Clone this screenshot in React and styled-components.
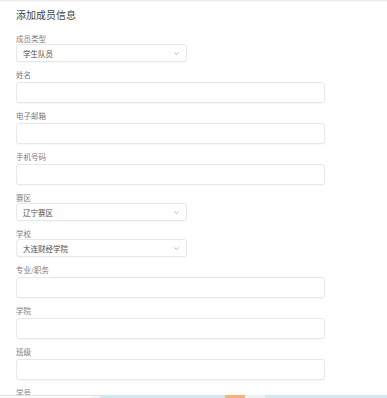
import React from 'react'
import styled, { createGlobalStyle } from 'styled-components'

const GlobalStyle = createGlobalStyle`
  html, body {
    margin: 0;
    padding: 0;
    background: #fff;
    font-family: "Noto Sans CJK SC", "Noto Sans", sans-serif;
    overflow: hidden;
  }
`

const Page = styled.div`
  width: 387px;
  height: 398px;
  overflow: hidden;
  position: relative;
  box-shadow: inset 0 2px 2px -1px rgba(0, 0, 0, 0.1);
`

const Form = styled.div`
  padding: 8px 16px 0 16px;
  display: flex;
  flex-direction: column;
  gap: 8px;
`

const Title = styled.h3`
  margin: 0 0 4px 0;
  font-size: 10px;
  line-height: 14px;
  font-weight: 400;
  color: #444;
`

const Field = styled.div`
  display: flex;
  flex-direction: column;
`

const Label = styled.label`
  font-size: 7.5px;
  line-height: 10px;
  height: 10px;
  color: #7a7c80;
  margin-bottom: ${p => (p.$select ? '0' : '2px')};
`

const Input = styled.div`
  box-sizing: border-box;
  width: 309px;
  height: 21px;
  border: 1px solid #e6e8ec;
  border-radius: 3px;
  box-shadow: 0 1px 1px rgba(0, 0, 0, 0.03);
  background: #fff;
`

const Select = styled.div`
  box-sizing: border-box;
  width: 171px;
  height: 18px;
  border: 1px solid #e6e8ec;
  border-radius: 3px;
  box-shadow: 0 1px 1px rgba(0, 0, 0, 0.03);
  background: #fff;
  display: flex;
  align-items: center;
  justify-content: space-between;
  padding: 0 6px 0 6px;
`

const SelectText = styled.span`
  font-size: 7.5px;
  color: #4a4a4a;
`

const Chevron = styled.svg`
  width: 7px;
  height: 7px;
  color: #a8abb2;
`

const BottomStrip = styled.div`
  position: absolute;
  left: 0;
  right: 0;
  bottom: 0;
  height: 3px;
  display: flex;
`

const Seg = styled.div`
  height: 100%;
  flex: 0 0 ${p => p.$w}px;
  background: ${p => p.$c};
  border-top: ${p => (p.$line ? '1px solid #e2e2e2' : 'none')};
  box-sizing: border-box;
`

const ChevronIcon = () => (
  <Chevron viewBox="0 0 10 10">
    <path d="M2 3.5 L5 6.5 L8 3.5" fill="none" stroke="currentColor" strokeWidth="1.2" />
  </Chevron>
)

const fields = [
  { label: '成员类型', select: '学生队员' },
  { label: '姓名' },
  { label: '电子邮箱' },
  { label: '手机号码' },
  { label: '赛区', select: '辽宁赛区' },
  { label: '学校', select: '大连财经学院' },
  { label: '专业/职务' },
  { label: '学院' },
  { label: '班级' },
  { label: '学号' },
]

const App = () => {
  return (
    <Page>
      <GlobalStyle />
      <Form>
        <Title>添加成员信息</Title>
        {fields.map(f => (
          <Field key={f.label}>
            <Label $select={!!f.select}>{f.label}</Label>
            {f.select ? (
              <Select>
                <SelectText>{f.select}</SelectText>
                <ChevronIcon />
              </Select>
            ) : (
              <Input />
            )}
          </Field>
        ))}
      </Form>
      <BottomStrip>
        <Seg $w={92} $c="#fafafa" $line />
        <Seg $w={8} $c="#f4f4f4" $line />
        <Seg $w={125} $c="#d4e6ee" />
        <Seg $w={20} $c="#f6b27a" />
        <Seg $w={20} $c="#eef3f5" />
        <Seg $w={122} $c="#d4e6ee" />
      </BottomStrip>
    </Page>
  )
}

export default App
